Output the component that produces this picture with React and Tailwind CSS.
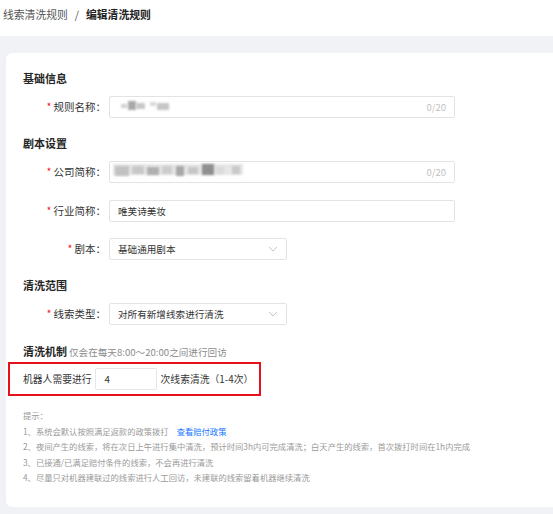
import React from "react";

const FONT = { fontFamily: '"Noto Sans CJK SC", "Noto Sans", sans-serif' };

function Chevron() {
  return (
    <svg width="10" height="6" viewBox="0 0 10 6" fill="none" className="shrink-0">
      <path d="M1 1 L5 5 L9 1" stroke="#c4c4c4" strokeWidth="1" />
    </svg>
  );
}

function Label({ children }) {
  return (
    <div className="w-[86px] shrink-0 text-right text-[10.5px] leading-[22px] text-[#333] pr-[3px]">
      <span className="text-[#f5222d] mr-[2px]">*</span>
      {children}：
    </div>
  );
}

function Heading({ children, className = "" }) {
  return (
    <div className={`text-[11px] leading-[16px] font-bold text-[#262626] ${className}`}>{children}</div>
  );
}

function Blur({ blobs }) {
  return (
    <div className="relative flex-1 h-full">
      {blobs.map((b, i) => (
        <div
          key={i}
          className="absolute blur-[1px]"
          style={{ left: b[0], top: b[1], width: b[2], height: b[3], background: b[4] }}
        />
      ))}
    </div>
  );
}

export default function App() {
  return (
    <div style={FONT} className="w-[553px] h-[514px] bg-white overflow-hidden">
      <div className="h-[36px] pl-[3px] flex items-start pt-[5px] text-[10.8px] leading-[18px]">
        <span className="text-[#555]">线索清洗规则</span>
        <span className="text-[#555] mx-[7px]">/</span>
        <span className="text-[#222] font-bold">编辑清洗规则</span>
      </div>
      <div className="bg-[#f0f2f5] h-[478px] pt-[17px] pl-[6px]">
        <div className="bg-white h-[454px] rounded-l-[6px] pl-[17px] pt-[17px]">
          <Heading>基础信息</Heading>
          <div className="flex mt-[10px]">
            <Label>规则名称</Label>
            <div className="w-[346px] h-[22px] border border-[#e3e3e3] rounded-[2px] flex items-center pr-[8px]">
              <Blur
                blobs={[
                  [11, 7, 6, 4, "#d0d0d0"],
                  [18, 4, 8, 9, "#a8a8a8"],
                  [26, 6, 9, 6, "#c8c8c8"],
                  [40, 5, 6, 4, "#d8d8d8"],
                  [47, 6, 12, 7, "#c6c6c6"],
                ]}
              />
              <span className="text-[9.5px] text-[#bfbfbf]">0/20</span>
            </div>
          </div>

          <Heading className="mt-[17px]">剧本设置</Heading>
          <div className="flex mt-[10px]">
            <Label>公司简称</Label>
            <div className="w-[346px] h-[22px] border border-[#e3e3e3] rounded-[2px] flex items-center pr-[8px]">
              <Blur
                blobs={[
                  [3, 2, 130, 11, "#e6e6e6"],
                  [5, 4, 14, 10, "#c2c2c2"],
                  [22, 4, 12, 8, "#c8c8c8"],
                  [37, 5, 12, 8, "#b0b0b0"],
                  [52, 4, 10, 8, "#cccccc"],
                  [66, 4, 8, 10, "#a8a8a8"],
                  [78, 5, 10, 7, "#c6c6c6"],
                  [92, 2, 12, 11, "#8f8f8f"],
                  [106, 5, 8, 7, "#dadada"],
                  [122, 4, 8, 8, "#c9c9c9"],
                ]}
              />
              <span className="text-[9.5px] text-[#bfbfbf]">0/20</span>
            </div>
          </div>
          <div className="flex mt-[17px]">
            <Label>行业简称</Label>
            <div className="w-[346px] h-[22px] border border-[#e3e3e3] rounded-[2px] flex items-center pl-[8px] text-[9.6px] text-[#333]">
              唯芙诗美妆
            </div>
          </div>
          <div className="flex mt-[16px]">
            <Label>剧本</Label>
            <div className="w-[178px] h-[22px] border border-[#e3e3e3] rounded-[2px] flex items-center justify-between pl-[8px] pr-[8px] text-[9.6px] text-[#333]">
              <span>基础通用剧本</span>
              <Chevron />
            </div>
          </div>

          <Heading className="mt-[17px]">清洗范围</Heading>
          <div className="flex mt-[10px]">
            <Label>线索类型</Label>
            <div className="w-[178px] h-[22px] border border-[#e3e3e3] rounded-[2px] flex items-center justify-between pl-[8px] pr-[8px] text-[9.6px] text-[#333]">
              <span>对所有新增线索进行清洗</span>
              <Chevron />
            </div>
          </div>

          <div className="flex items-baseline mt-[18px]">
            <Heading>清洗机制</Heading>
            <span className="ml-[2px] text-[9.6px] text-[#8c8c8c]">仅会在每天8:00～20:00之间进行回访</span>
          </div>
          <div className="-ml-[15px] mt-[3px] w-[253px] h-[34px] border-2 border-[#e8101a] flex items-center pl-[13px] text-[9.8px] text-[#333]">
            <span>机器人需要进行</span>
            <div className="ml-[3px] w-[62px] h-[22px] border border-[#e6e6e6] rounded-[2px] flex items-center pl-[9px]">4</div>
            <span className="ml-[4px]">次线索清洗（1-4次）</span>
          </div>

          <div className="mt-[12px] text-[8.3px] leading-[15.5px] text-[#9a9a9a]">
            <div>提示：</div>
            <div>
              1、系统会默认按照满足返款的政策拨打<span className="ml-[8px] text-[#1677ff]">查看赔付政策</span>
            </div>
            <div>2、夜间产生的线索，将在次日上午进行集中清洗，预计时间3h内可完成清洗；白天产生的线索，首次拨打时间在1h内完成</div>
            <div>3、已接通/已满足赔付条件的线索，不会再进行清洗</div>
            <div>4、尽量只对机器建联过的线索进行人工回访，未建联的线索留着机器继续清洗</div>
          </div>
        </div>
      </div>
    </div>
  );
}
